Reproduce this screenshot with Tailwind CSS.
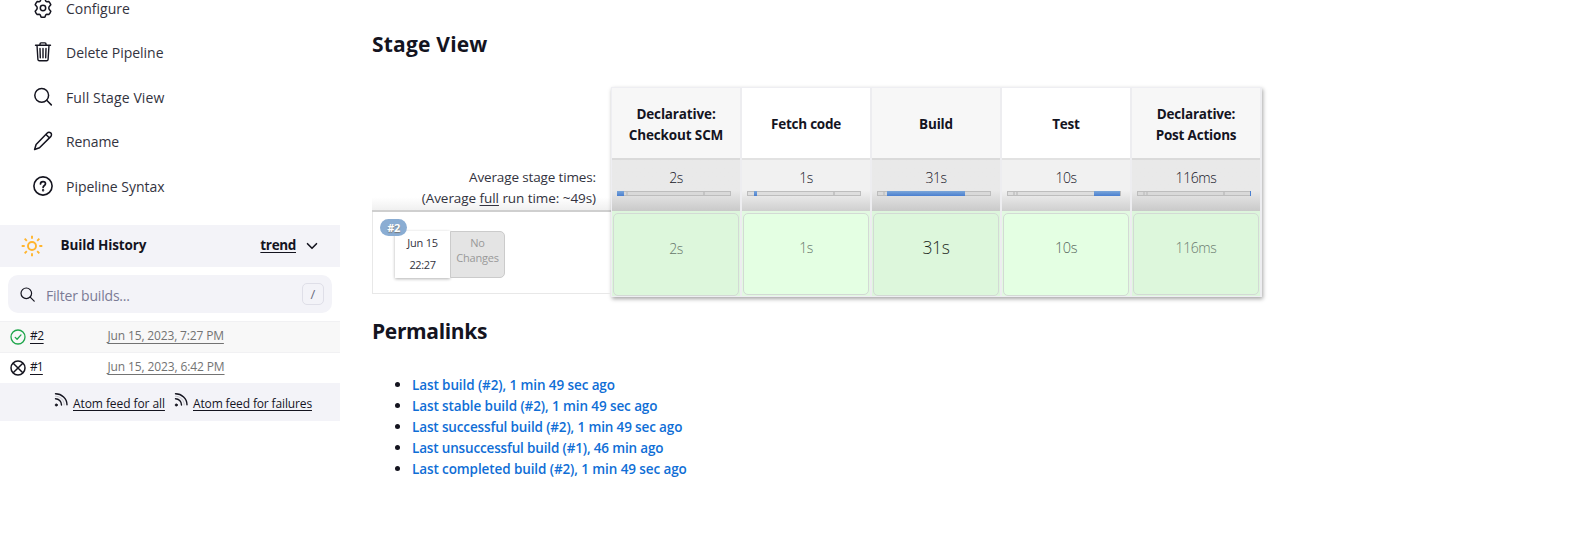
<!DOCTYPE html>
<html lang="en">
<head>
<meta charset="utf-8">
<title>Pipeline - Stage View</title>
<script src="https://cdn.jsdelivr.net/npm/@tailwindcss/browser@4"></script>
</head>
<body class="flex h-[540px] overflow-hidden bg-white font-['Open_Sans',sans-serif] text-sm text-[#14141f]">

<aside class="w-[340px] shrink-0">
  <nav class="-mt-[14.5px] font-medium text-[#333340]">
    <a class="flex h-[44.5px] items-center gap-[13px] pl-[33px]">
      <svg class="size-5 text-[#14141f]" viewBox="0 0 20 20" fill="none" stroke="currentColor" stroke-width="1.5" stroke-linejoin="round"><circle cx="10" cy="10" r="2.7"/><path d="M8 .9q2-.5 4 0l.6 1.800q.3.900 1.200 1l2-.3q1.400 1.500 2 3.400l-1.300 1.500q-.7.800-.7 1.700t.7 1.700l1.300 1.500q-.6 1.900-2 3.400l-2-.3q-.9.100-1.200 1L12 19.100q-2 .5-4 0l-.6-1.800q-.3-.9-1.200-1l-2 .3q-1.400-1.500-2-3.400l1.300-1.500q.7-.8.7-1.700t-.7-1.700L2.200 6.800q.6-1.900 2-3.400l2 .3q.9-.1 1.200-1z"/></svg>
      <span class="mt-0.5">Configure</span></a>
    <a class="flex h-[44.5px] items-center gap-[13px] pl-[33px]">
      <svg class="size-5 text-[#14141f]" viewBox="0 0 20 20" fill="none" stroke="currentColor" stroke-width="1.4" stroke-linecap="round" stroke-linejoin="round"><path d="M2.500 3.300h15M4 3.300l.9 14c.1.900.7 1.500 1.500 1.500h7.200c.8 0 1.400-.6 1.500-1.500l.9-14M7 3V1.900c0-.6.4-1 1-1h4c.6 0 1 .4 1 1V3M10 6.500v9.300M7 6.500l.3 9.300M13 6.500l-.3 9.300"/></svg>
      <span class="mt-0.5 tracking-[-0.02px]">Delete Pipeline</span></a>
    <a class="flex h-[44.5px] items-center gap-[13px] pl-[33px]">
      <svg class="size-5 text-[#14141f]" viewBox="0 0 20 20" fill="none" stroke="currentColor" stroke-width="1.500" stroke-linecap="round"><circle cx="8.700" cy="8.300" r="6.900"/><path d="M13.700 13.300l4.600 4.600"/></svg>
      <span class="mt-0.5 tracking-[0.12px]">Full Stage View</span></a>
    <a class="flex h-[44.5px] items-center gap-[13px] pl-[33px]">
      <svg class="size-5 text-[#14141f]" viewBox="0 0 20 20" fill="none" stroke="currentColor" stroke-width="1.500" stroke-linecap="round" stroke-linejoin="round"><path d="M1.600 18.500l1.500-5L14 2.200c1-1 2.600-1.200 3.700-.3 1.100 1 1 2.700 0 3.700L6.500 16.800zM13 3.500l3.500 3.500"/></svg>
      <span class="mt-0.5 tracking-[-0.1px]">Rename</span></a>
    <a class="flex h-[44.5px] items-center gap-[13px] pl-[33px]">
      <svg class="size-5 text-[#14141f]" viewBox="0 0 20 20" fill="none" stroke="currentColor" stroke-width="1.600" stroke-linecap="round"><circle cx="10" cy="10" r="9.100"/><path d="M7.500 8c0-1.500 1.100-2.400 2.500-2.400s2.500.8 2.500 2.200c0 1.700-2.400 1.700-2.400 3.700" stroke-width="1.700"/><circle cx="10.100" cy="14.200" r=".4"/></svg>
      <span class="mt-0.5 tracking-[-0.03px]">Pipeline Syntax</span></a>
  </nav>

  <section class="mt-[17px]">
    <header class="flex h-[42px] items-center bg-[#f3f3f8] pl-[21px] font-bold">
      <svg class="size-[22px]" viewBox="0 0 22 22" fill="none" stroke="#ffb52e" stroke-width="1.900"><circle cx="11" cy="11" r="4"/><path d="M11 .7v3M11 18.300v3M.7 11h3M18.300 11h3M3.700 3.700l2.100 2.100M16.200 16.200l2.100 2.100M18.300 3.700l-2.100 2.100M5.800 16.200l-2.100 2.100"/></svg>
      <h2 class="ml-[17.500px] grow text-[13.500px] tracking-[-0.12px]">Build History</h2>
      <a class="text-[13.500px] tracking-[-0.35px] underline underline-offset-2">trend</a>
      <svg class="ml-[11px] mr-[23px] size-[10px] overflow-visible" viewBox="0 0 10 10" fill="none" stroke="currentColor" stroke-width="1.600" stroke-linecap="round" stroke-linejoin="round"><path d="M.5 2.700l4.500 4.600 4.500-4.600"/></svg>
    </header>
    <div class="mx-2 mt-2 flex h-[38px] items-center rounded-[10px] bg-[#f3f3f8] pl-3 pr-2">
      <svg class="size-[15px]" viewBox="0 0 15 15" fill="none" stroke="currentColor" stroke-width="1.200" stroke-linecap="round"><circle cx="6.300" cy="6.300" r="5.300"/><path d="M10.200 10.200l4 4"/></svg>
      <span class="ml-[11px] mt-[3px] grow font-medium tracking-[-0.2px] text-[#7b7b95]">Filter builds...</span>
      <kbd class="flex size-[22px] items-center justify-center rounded-[5px] border border-[#dfdfe8] font-['Open_Sans',sans-serif] text-[13px] text-[#6a6a80]">/</kbd>
    </div>
    <div class="mt-2 text-xs">
      <div class="flex h-[31px] items-center border-t border-[#f1f1f3] bg-[#f8f8f8] pl-[10px]">
        <svg class="size-4" viewBox="0 0 16 16" fill="none" stroke="#1ea64b" stroke-width="1.300" stroke-linecap="round" stroke-linejoin="round"><circle cx="8" cy="8" r="7"/><path d="M5.200 8.400l1.900 1.900 3.900-4.400"/></svg>
        <a class="-mt-0.5 ml-1 w-[77.500px] tracking-[-0.5px] underline underline-offset-[3px]">#2</a>
        <a class="-mt-0.5 tracking-[-0.15px] text-[#737373] underline underline-offset-[3px]">Jun 15, 2023, 7:27 PM</a>
      </div>
      <div class="flex h-[31px] items-center border-t border-[#f1f1f3] pl-[10px]">
        <svg class="size-4" viewBox="0 0 16 16" fill="none" stroke="currentColor" stroke-width="1.500"><circle cx="8" cy="8" r="7"/><path d="M3.200 3.200l9.600 9.600M12.800 3.200l-9.600 9.600"/></svg>
        <a class="-mt-0.5 ml-1 w-[77.500px] tracking-[-0.9px] underline underline-offset-[3px]">#1</a>
        <a class="-mt-0.5 tracking-[-0.12px] text-[#737373] underline underline-offset-[3px]">Jun 15, 2023, 6:42 PM</a>
      </div>
    </div>
    <footer class="flex h-[38px] items-center bg-[#f3f3f8] pl-[54px] text-xs">
      <svg class="-mt-1 size-[14px]" viewBox="0 0 14 14" fill="none" stroke="currentColor" stroke-width="1.400" stroke-linecap="round"><circle cx="2.300" cy="12" r="1.100" fill="currentColor" stroke-width=".8"/><path d="M1.500 5.700c3.300 0 6 2.900 6 6.300M1.500.8c6.300 0 11.500 5 11.500 11"/><path d="M1.500 3.200c4.800 0 8.700 3.900 8.700 8.700" stroke-width=".5" opacity=".4"/></svg>
      <a class="ml-[5px] mt-[3px] w-[92px] tracking-[-0.08px] underline underline-offset-2">Atom feed for all</a>
      <svg class="-mt-1 ml-[9px] size-[14px]" viewBox="0 0 14 14" fill="none" stroke="currentColor" stroke-width="1.400" stroke-linecap="round"><circle cx="2.300" cy="12" r="1.100" fill="currentColor" stroke-width=".8"/><path d="M1.500 5.700c3.300 0 6 2.900 6 6.300M1.500.8c6.300 0 11.500 5 11.500 11"/><path d="M1.500 3.200c4.800 0 8.700 3.900 8.700 8.700" stroke-width=".5" opacity=".4"/></svg>
      <a class="ml-[5px] mt-[3px] tracking-[-0.14px] underline underline-offset-2">Atom feed for failures</a>
    </footer>
  </section>
</aside>

<main class="ml-8 grow pt-[29px]">
  <h1 class="h-[30px] text-[21px] font-bold leading-[30px] tracking-[0.2px]">Stage View</h1>

  <div class="mt-7 flex">
    <div class="w-[239px] shrink-0 pt-[72px]">
      <div class="h-[53px] border-b-2 border-[#cfcfcf] bg-linear-to-b from-white from-75% to-[#f0f0f0] pr-[15px] pt-[7.500px] text-right text-[13.500px] leading-[21px] text-[#333340]">
        <p class="tracking-[-0.14px]">Average stage times:</p>
        <p class="tracking-[-0.06px]">(Average <u class="underline-offset-2">full</u> run time: ~49s)</p>
      </div>
      <div class="relative h-[82px] border-b border-l border-[#e8e8e8] pl-[22px] pt-[19px]">
        <span class="absolute left-[7px] top-[7px] flex h-[17px] w-[27px] items-center justify-center rounded-full bg-[#8aadd3] text-[11px] font-bold tracking-[-0.500px] text-white [text-shadow:0_1px_1px_#777]">#2</span>
        <div class="flex h-[47px] w-[110px] text-center text-[11px]">
          <div class="w-[55px] shrink-0 bg-white pt-px leading-[22px] tracking-[-0.200px] text-[#333340] shadow-[0_1px_3px_rgba(0,0,0,0.3)]"><p>Jun 15</p><p class="tracking-[-0.400px]">22:27</p></div>
          <div class="w-[55px] rounded-r-[5px] border border-[#cbcbcb] bg-[#e4e4e4] pt-[3px] leading-[15px] tracking-[-0.200px] text-[#999]">No<br>Changes</div>
        </div>
      </div>
    </div>

    <div class="grid h-[210px] w-[651px] grid-cols-[repeat(5,130px)] border border-[#eeeef2] bg-[#e9e9ec] text-center shadow-[1px_2px_4px_rgba(0,0,0,0.35)]">
      <!-- Checkout SCM -->
      <div class="border-r-2 border-[#ededf0]">
        <div class="flex h-[72px] items-center justify-center border-b-2 border-[#dadada] bg-[#f7f7f7] px-2 pt-[3px] text-[13.500px] font-bold leading-[21px] tracking-[-0.150px]">Declarative: Checkout SCM</div>
        <div class="h-[51px] bg-linear-to-b from-[#e9e9e9] from-60% to-[#c9c9c9] px-[5px] pt-[7px]">
          <p class="h-6 text-[14px] font-light leading-[21px] tracking-[-0.400px]">2s</p>
          <div class="flex h-[5px] w-[114px] border border-[#bdbdbd] bg-[#d9d9d9]"><i class="-my-px -ml-px w-[7px] bg-linear-to-b from-[#7ba6d9] to-[#4a7fd0]"></i><i class="ml-0.5 w-0.5 bg-[#c8c8c8]"></i><i class="ml-[75px] w-0.5 bg-[#c4c4c4]"></i></div>
        </div>
        <div class="h-[85px] bg-[#ddf6dc] px-px pt-[2px]"><div class="flex h-[83px] items-start justify-center rounded-[5px] border border-[#d3dad5] bg-[#ddf7dc] pt-[24px] text-[14px] font-light leading-[21px] tracking-[-0.400px] text-[#65756a]">2s</div></div>
      </div>
      <!-- Fetch code -->
      <div class="border-r-2 border-[#ededf0]">
        <div class="flex h-[72px] items-center justify-center border-b-2 border-[#e2e2e2] bg-white px-2 pt-[3px] text-[13.500px] font-bold leading-[21px] tracking-[-0.230px]">Fetch code</div>
        <div class="h-[51px] bg-linear-to-b from-[#f1f1f1] from-60% to-[#cfcfcf] px-[5px] pt-[7px]">
          <p class="h-6 text-[14px] font-light leading-[21px] tracking-[-0.400px]">1s</p>
          <div class="flex h-[5px] w-[114px] border border-[#bdbdbd] bg-[#dedede]"><i class="-my-px ml-1.5 w-[3px] bg-linear-to-b from-[#7ba6d9] to-[#4a7fd0]"></i><i class="ml-[76px] w-0.5 bg-[#c4c4c4]"></i></div>
        </div>
        <div class="h-[85px] bg-[#e2f9e1] px-px pt-[2px]"><div class="flex h-[82px] items-start justify-center rounded-[5px] border border-[#d3dad5] bg-[#e4ffe3] pt-[23px] text-[14px] font-light leading-[21px] tracking-[-0.400px] text-[#65756a]">1s</div></div>
      </div>
      <!-- Build -->
      <div class="border-r-2 border-[#ededf0]">
        <div class="flex h-[72px] items-center justify-center border-b-2 border-[#dadada] bg-[#f7f7f7] px-2 pt-[3px] text-[13.500px] font-bold leading-[21px] tracking-[-0.150px]">Build</div>
        <div class="h-[51px] bg-linear-to-b from-[#e9e9e9] from-60% to-[#c9c9c9] px-[5px] pt-[7px]">
          <p class="h-6 text-[14px] font-light leading-[21px] tracking-[-0.500px]">31s</p>
          <div class="flex h-[5px] w-[114px] border border-[#bdbdbd] bg-[#d9d9d9]"><i class="ml-[5px] w-0.5 bg-[#c8c8c8]"></i><i class="-my-px ml-0.5 w-[78px] bg-linear-to-b from-[#7ba6d9] to-[#4a7fd0]"></i></div>
        </div>
        <div class="h-[85px] bg-[#ddf6dc] px-px pt-[2px]"><div class="flex h-[83px] items-start justify-center rounded-[5px] border border-[#d3dad5] bg-[#ddf7dc] pt-[23px] text-[17.500px] font-light leading-[21px] tracking-[-0.400px] text-[#1d2a22]">31s</div></div>
      </div>
      <!-- Test -->
      <div class="border-r-2 border-[#ededf0]">
        <div class="flex h-[72px] items-center justify-center border-b-2 border-[#e2e2e2] bg-white px-2 pt-[3px] text-[13.500px] font-bold leading-[21px] tracking-[-0.200px]">Test</div>
        <div class="h-[51px] bg-linear-to-b from-[#f1f1f1] from-60% to-[#cfcfcf] px-[5px] pt-[7px]">
          <p class="h-6 text-[14px] font-light leading-[21px] tracking-[-0.500px]">10s</p>
          <div class="flex h-[5px] w-[114px] border border-[#bdbdbd] bg-[#dedede]"><i class="ml-[5px] w-0.5 bg-[#c8c8c8]"></i><i class="ml-px w-0.5 bg-[#c8c8c8]"></i><i class="-my-px ml-[76px] w-[27px] bg-linear-to-b from-[#7ba6d9] to-[#4a7fd0]"></i></div>
        </div>
        <div class="h-[85px] bg-[#e2f9e1] px-px pt-[2px]"><div class="flex h-[83px] items-start justify-center rounded-[5px] border border-[#d3dad5] bg-[#e4ffe3] pt-[23px] text-[14.500px] font-light leading-[21px] tracking-[-0.400px] text-[#55655a]">10s</div></div>
      </div>
      <!-- Post Actions -->
      <div class="border-r-2 border-[#ededf0]">
        <div class="flex h-[72px] items-center justify-center border-b-2 border-[#dadada] bg-[#f7f7f7] px-2 pt-[3px] text-[13.500px] font-bold leading-[21px] tracking-[-0.200px]"><span>Declarative:<br>Post Actions</span></div>
        <div class="h-[51px] bg-linear-to-b from-[#e9e9e9] from-60% to-[#c9c9c9] px-[5px] pt-[7px]">
          <p class="h-6 text-[14px] font-light leading-[21px] tracking-[-0.400px]">116ms</p>
          <div class="flex h-[5px] w-[114px] border border-[#bdbdbd] bg-[#d9d9d9]"><i class="ml-[5px] w-0.5 bg-[#c8c8c8]"></i><i class="ml-px w-0.5 bg-[#c8c8c8]"></i><i class="ml-[75px] w-0.5 bg-[#c4c4c4]"></i><i class="-my-px -mr-px ml-auto w-px bg-[#4a7fd0]"></i></div>
        </div>
        <div class="h-[85px] bg-[#ddf6dc] px-px pt-[2px]"><div class="flex h-[82px] items-start justify-center rounded-[5px] border border-[#d3dad5] bg-[#ddf7dc] pt-[23px] text-[14px] font-light leading-[21px] tracking-[-0.400px] text-[#6b7b70]">116ms</div></div>
      </div>
    </div>
  </div>

  <h2 class="mt-[19px] h-[30px] text-[21px] font-bold leading-[30px] tracking-[-0.350px]">Permalinks</h2>
  <ul class="mt-[29px] list-none text-[13.500px] font-semibold leading-[21px] tracking-[-0.100px] text-[#0f6ed6]">
    <li class="flex items-center pl-[23px]"><i class="-mt-0.5 mr-3 size-[5px] rounded-full bg-[#14141f]"></i><a>Last build (#2), 1 min 49 sec ago</a></li>
    <li class="flex items-center pl-[23px]"><i class="-mt-0.5 mr-3 size-[5px] rounded-full bg-[#14141f]"></i><a>Last stable build (#2), 1 min 49 sec ago</a></li>
    <li class="flex items-center pl-[23px]"><i class="-mt-0.5 mr-3 size-[5px] rounded-full bg-[#14141f]"></i><a class="tracking-[-0.140px]">Last successful build (#2), 1 min 49 sec ago</a></li>
    <li class="flex items-center pl-[23px]"><i class="-mt-0.5 mr-3 size-[5px] rounded-full bg-[#14141f]"></i><a class="tracking-[-0.160px]">Last unsuccessful build (#1), 46 min ago</a></li>
    <li class="flex items-center pl-[23px]"><i class="-mt-0.5 mr-3 size-[5px] rounded-full bg-[#14141f]"></i><a>Last completed build (#2), 1 min 49 sec ago</a></li>
  </ul>
</main>
</body>
</html>
